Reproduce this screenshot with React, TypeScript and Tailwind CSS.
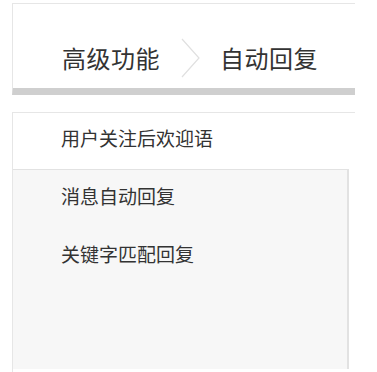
import React from "react";

const items = ["消息自动回复", "关键字匹配回复"];

const App = () => {
  return (
    <div
      className="w-[377px] h-[372px] bg-white pt-[3px] pl-[12px] text-[#333] overflow-hidden"
      style={{ fontFamily: '"Noto Sans CJK SC", "Noto Sans", sans-serif' }}
    >
      <div className="w-[343px] h-[92px] border-t border-l border-[#e6e6e6] border-b-[7px] border-b-[#cfcfcf] flex items-center pl-[49px] pt-[24px]">
        <span className="text-[24px] tracking-[0.5px] leading-none">高级功能</span>
        <svg width="24" height="40" viewBox="0 0 24 40" className="mx-[18px]">
          <path d="M4 1 L21 20 L4 39" fill="none" stroke="#e0e0e0" strokeWidth="1.2" />
        </svg>
        <span className="text-[24px] tracking-[0.5px] leading-none">自动回复</span>
      </div>

      <div className="mt-[17px] w-[343px] h-[260px] border-t border-l border-[#e6e6e6] flex flex-col">
        <div className="h-[56px] flex items-center pl-[48px] pb-[8px] bg-white">
          <span className="text-[19px] leading-none">用户关注后欢迎语</span>
        </div>
        <div className="w-[336px] h-[200px] bg-[#f7f7f7] border-t border-r-2 border-[#e2e2e2]">
          {items.map((label) => (
            <div key={label} className="h-[58px] flex items-center pl-[48px] pb-[8px]">
              <span className="text-[19px] leading-none">{label}</span>
            </div>
          ))}
        </div>
      </div>
    </div>
  );
};

export default App;
